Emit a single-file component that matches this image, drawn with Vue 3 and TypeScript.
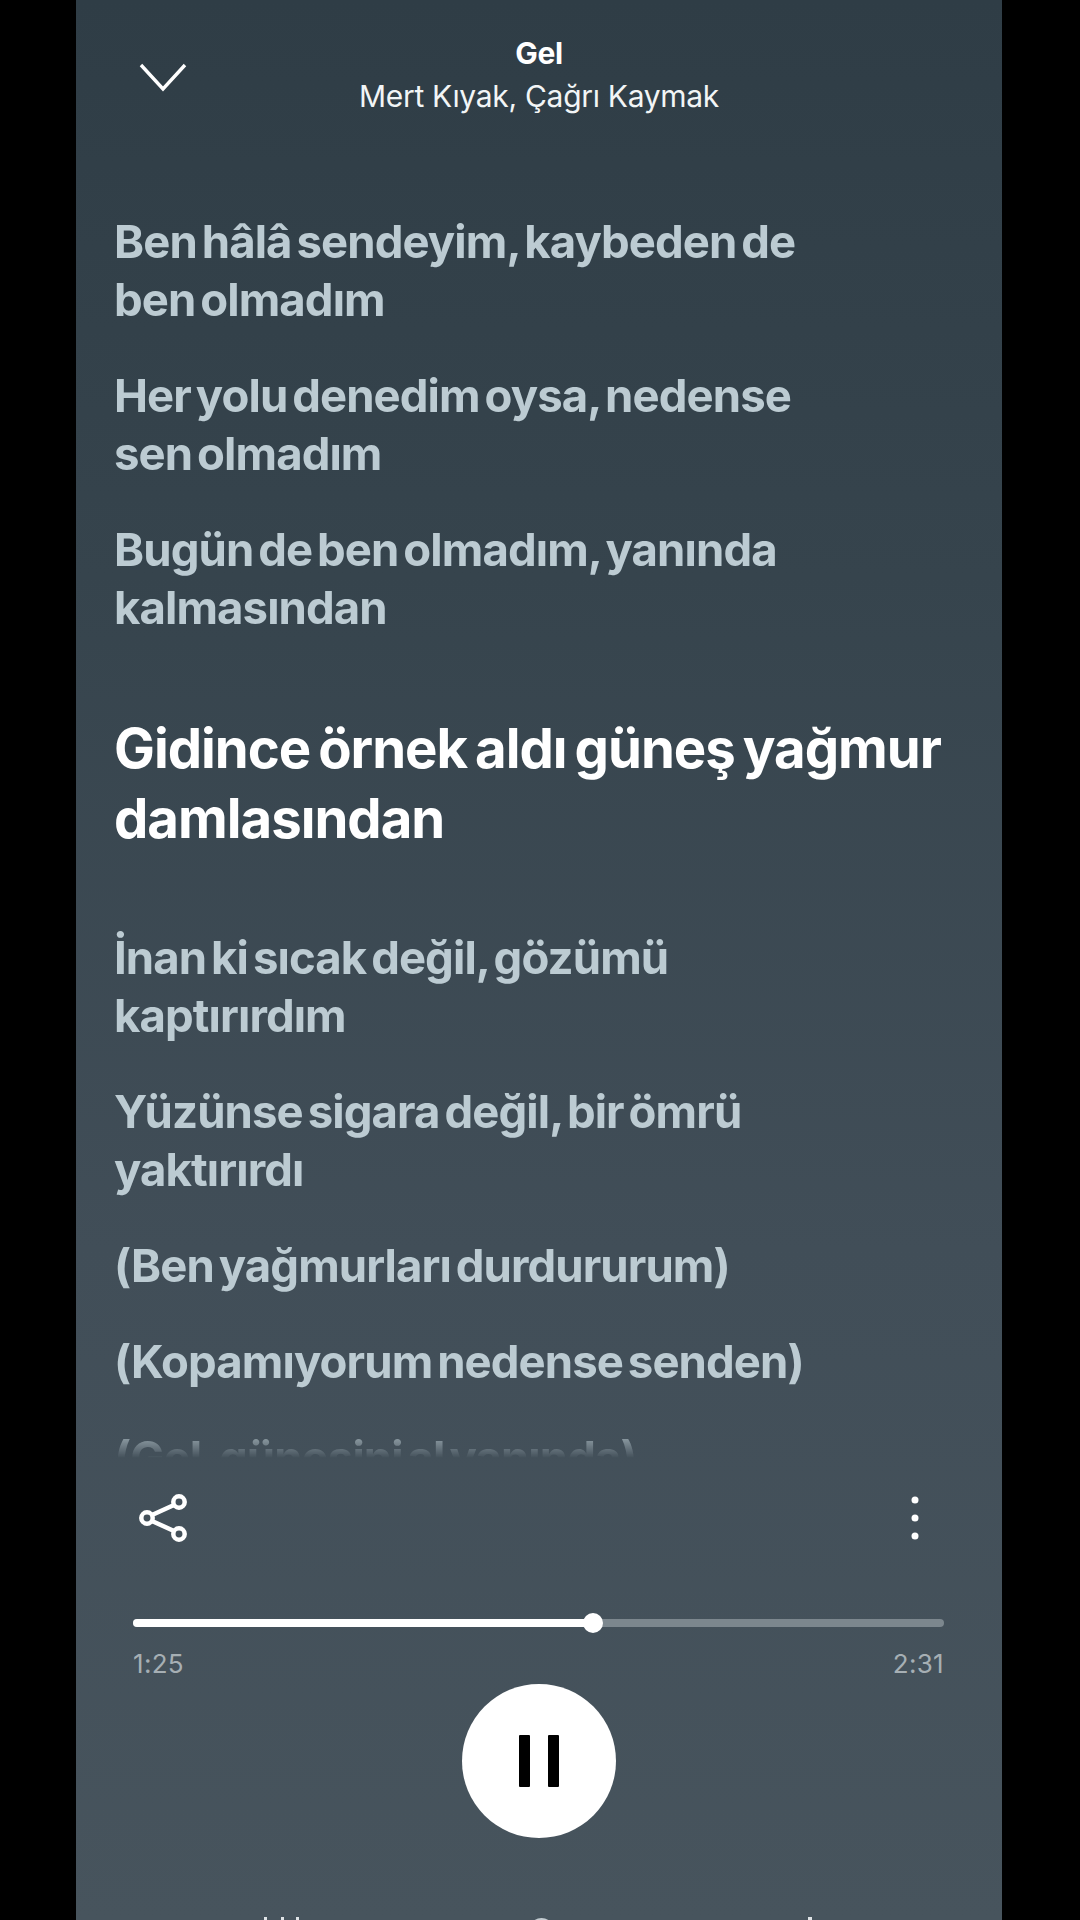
<script setup lang="ts">
// Lyrics view of a music player, with playback controls underneath.
interface Lyric { text: string; active?: boolean }

const lyrics: Lyric[] = [
  { text: 'Ben hâlâ sendeyim, kaybeden de ben olmadım' },
  { text: 'Her yolu denedim oysa, nedense sen olmadım' },
  { text: 'Bugün de ben olmadım, yanında kalmasından' },
  { text: 'Gidince örnek aldı güneş yağmur damlasından', active: true },
  { text: 'İnan ki sıcak değil, gözümü kaptırırdım' },
  { text: 'Yüzünse sigara değil, bir ömrü yaktırırdı' },
  { text: '(Ben yağmurları durdururum)' },
  { text: '(Kopamıyorum nedense senden)' },
  { text: '(Gel, güneşini al yanında)' },
]

const progress = 56.7
</script>

<template>
  <div class="screen">
    <main class="phone">
      <header class="top">
        <svg class="chevron" width="48" height="30" viewBox="0 0 48 30">
          <path d="M2 3 L24 27 L46 3" fill="none" stroke="#fff" stroke-width="3.4" />
        </svg>
        <div class="title">
          <div class="song">Gel</div>
          <div class="artist">Mert Kıyak, Çağrı Kaymak</div>
        </div>
      </header>

      <section class="lyrics">
        <p v-for="l in lyrics" :key="l.text" class="line" :class="{ active: l.active }">{{ l.text }}</p>
      </section>

      <section class="actions">
        <svg width="48" height="48" viewBox="0 0 48 48" fill="none" stroke="#fff" stroke-width="4.500">
          <path d="M13 21 L35 11 M13 27 L35 37" />
          <circle cx="8" cy="24" r="5.700" />
          <circle cx="40" cy="8" r="5.700" />
          <circle cx="40" cy="40" r="5.700" />
        </svg>
        <svg width="10" height="46" viewBox="0 0 10 46" fill="#fff">
          <circle cx="5" cy="5" r="3.500" />
          <circle cx="5" cy="23" r="3.500" />
          <circle cx="5" cy="41" r="3.500" />
        </svg>
      </section>

      <section class="progress">
        <div class="track">
          <div class="fill" :style="{ width: progress + '%' }"><span class="knob"></span></div>
        </div>
        <div class="times"><span>1:25</span><span>2:31</span></div>
      </section>

      <div class="play">
        <svg width="40" height="52" viewBox="0 0 40 52" fill="#000">
          <rect x="0" y="0" width="11" height="52" rx="1" />
          <rect x="29" y="0" width="11" height="52" rx="1" />
        </svg>
      </div>

      <div class="extras">
        <svg width="40" height="10" viewBox="0 0 40 10" fill="none" stroke="#dfe4e7" stroke-width="3">
          <path d="M1.500 0 V10 M18.500 0 V10 M33.500 0 V10" />
        </svg>
        <span class="mid"></span>
        <span class="tick"></span>
      </div>
    </main>
  </div>
</template>

<style>
html, body { margin: 0; background: #000; }
</style>

<style scoped>
.screen {
  width: 1080px;
  height: 1920px;
  background: #000;
  display: flex;
  padding-left: 76px;
  box-sizing: border-box;
  overflow: hidden;
  font-family: Inter, "Liberation Sans", sans-serif;
}
.phone {
  width: 926px;
  height: 1920px;
  overflow: hidden;
  display: flex;
  flex-direction: column;
  background: linear-gradient(180deg, #2f3d46 0%, #36444d 30%, #414e58 65%, #47545d 100%);
}
.top {
  height: 130px;
  position: relative;
  flex: none;
  padding-top: 34px;
  box-sizing: border-box;
}
.chevron { position: absolute; left: 63px; top: 62px; }
.title { text-align: center; color: #fff; }
.song { font-size: 30px; font-weight: 700; line-height: 38px; letter-spacing: -0.4px; }
.artist { font-size: 30px; line-height: 40px; margin-top: 4px; letter-spacing: -0.3px; color: #f2f5f6; }
.lyrics {
  flex: none;
  height: 1328px;
  overflow: hidden;
  padding: 83px 38px 0;
  box-sizing: border-box;
  display: flex;
  flex-direction: column;
  -webkit-mask-image: linear-gradient(180deg, #000 97.5%, transparent 100%);
  mask-image: linear-gradient(180deg, #000 97.5%, transparent 100%);
}
.line {
  margin: 0 0 38px;
  max-width: 720px;
  font-size: 45.5px;
  line-height: 58px;
  font-weight: 700;
  letter-spacing: -0.9px;
  word-spacing: -5px;
  color: #bccbd2;
}
.line.active {
  color: #fff;
  font-size: 54.5px;
  line-height: 70px;
  max-width: 850px;
  letter-spacing: -1px;
  word-spacing: -4px;
  margin: 38px 0 76px;
}
.actions {
  flex: none;
  margin-top: 36px;
  padding: 0 82px 0 63px;
  display: flex;
  justify-content: space-between;
  align-items: center;
}
.progress { flex: none; margin-top: 77px; padding: 0 58px 0 57px; }
.track { height: 8px; border-radius: 4px; background: #7c878e; }
.fill { height: 8px; border-radius: 4px; background: #fff; position: relative; }
.knob {
  position: absolute;
  right: -10px;
  top: -6px;
  width: 20px;
  height: 20px;
  border-radius: 50%;
  background: #fff;
}
.times {
  display: flex;
  justify-content: space-between;
  margin-top: 20px;
  font-size: 26px;
  line-height: 34px;
  color: #a6afb4;
  letter-spacing: 0.3px;
}
.play {
  flex: none;
  align-self: center;
  margin-top: 3px;
  width: 154px;
  height: 154px;
  border-radius: 50%;
  background: #fff;
  display: flex;
  align-items: center;
  justify-content: center;
}
.extras {
  flex: none;
  margin-top: 79px;
  height: 20px;
  position: relative;
}
.extras svg { position: absolute; left: 188px; top: 0; }
.mid { position: absolute; left: 453px; top: 1px; width: 25px; height: 25px; border-radius: 50%; background: #c3ccd1; }
.tick { position: absolute; left: 732px; top: 0; width: 4px; height: 10px; background: #dfe4e7; }
</style>
